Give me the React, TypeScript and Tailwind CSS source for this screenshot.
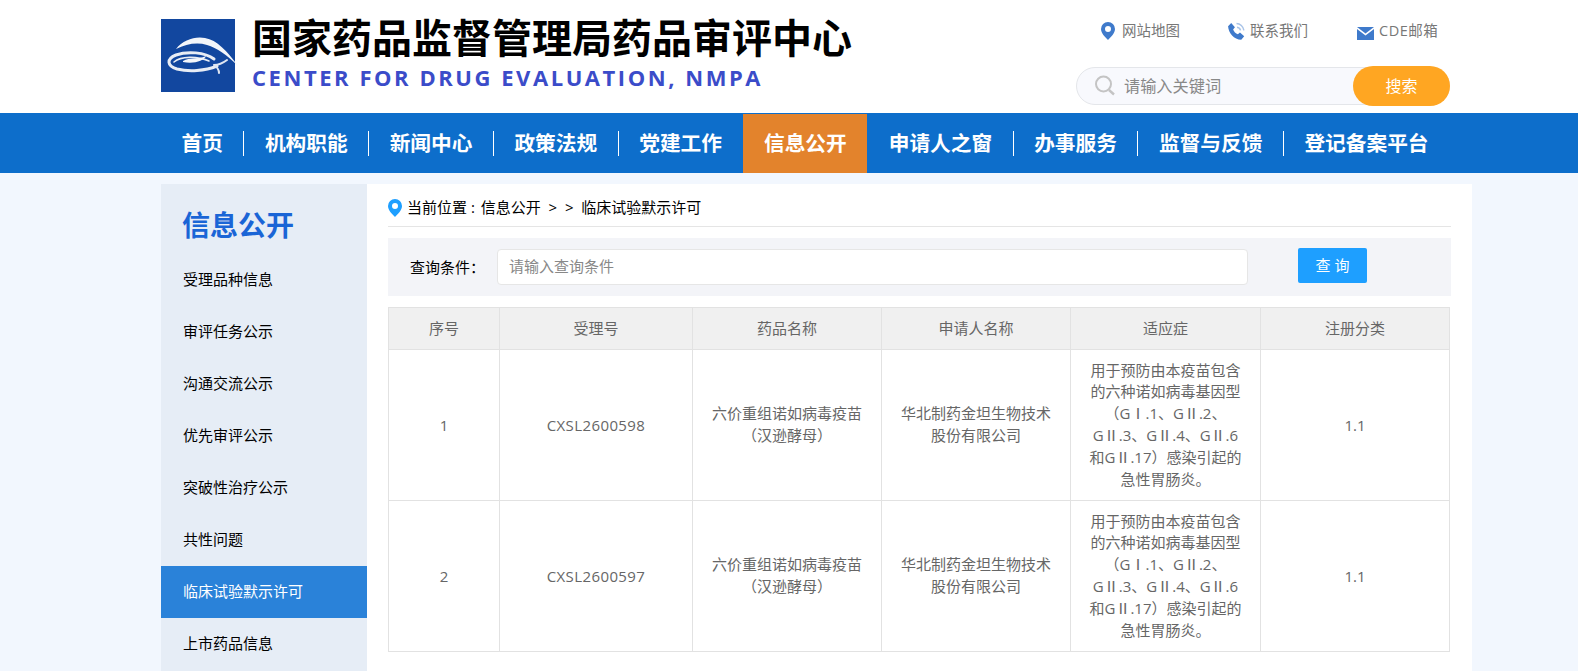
import React from "react";

const F = '"Open Sans","Noto Sans CJK SC",sans-serif';
const nav = ["首页","机构职能","新闻中心","政策法规","党建工作","信息公开","申请人之窗","办事服务","监督与反馈","登记备案平台"];
const side = ["受理品种信息","审评任务公示","沟通交流公示","优先审评公示","突破性治疗公示","共性问题","临床试验默示许可","上市药品信息"];
const cols = [111,193,189,189,190,189];
const heads = ["序号","受理号","药品名称","申请人名称","适应症","注册分类"];
const rows = [["1","CXSL2600598"],["2","CXSL2600597"]];

function Logo(){
  return (
    <svg width="80" height="73" viewBox="0 0 80 73" className="shrink-0 -mr-[6px]">
      <defs><filter id="b" x="-10%" y="-10%" width="120%" height="120%"><feGaussianBlur stdDeviation="0.7"/></filter></defs>
      <rect width="74" height="73" fill="#12479f"/>
      <g fill="none" strokeLinecap="round" filter="url(#b)">
        <path d="M15 30 C22 21 34 17 44 19 C56 21 66 32 77 47 C66 36 56 29 46 26 C36 23 25 25 15 30Z" fill="#f2f5fa" stroke="none"/>
        <path d="M53 40 C44 33 26 32 15 36 C5 40 6 47 16 50 C28 53 44 52 56 47" stroke="#e8edf5" strokeWidth="3"/>
        <path d="M13 43 C20 37 36 37 48 42" stroke="#e8edf5" strokeWidth="1.600"/>
        <path d="M53 46 C56 48 58 51 58 54 M53 46 C58 46 62 44 66 41" stroke="#dfe6f2" strokeWidth="2"/>
        <path d="M22 42 C29 38 36 41 45 37 C43 42 33 45 22 43Z" fill="#f5f7fb" stroke="none"/>
      </g>
    </svg>
  );
}
function Pin({c,w=14,h=18}:{c:string;w?:number;h?:number}){
  return <svg width={w} height={h} viewBox="0 0 14 18" className="shrink-0"><path fillRule="evenodd" d="M7 0a7 7 0 0 1 7 7c0 4-4 8-7 11C4 15 0 11 0 7a7 7 0 0 1 7-7Zm0 4a3 3 0 1 0 0 6 3 3 0 0 0 0-6Z" fill={c}/></svg>;
}
function Phone(){
  return <svg width="19" height="19" viewBox="0 0 18 18" className="shrink-0"><path d="M1 4 4 1l3.500 4-1.700 2c.8 2 2.400 3.700 4.500 4.700l2-1.700 4 3.500-2.800 3.300C6.500 16.800 1.500 10.500 1 4Z" fill="#3f7acb"/><path d="M9 1.500c3.400 0 6.500 2.800 7 6.500M9.500 5c1.700.2 3 1.300 3.300 3" fill="none" stroke="#a9c4e8" strokeWidth="1.400"/></svg>;
}
function Mail(){
  return <svg width="17" height="13" viewBox="0 0 17 13" className="shrink-0 mt-[4px]"><path d="M0 0h17L8.500 6.500Z" fill="#3f7acb"/><path d="M0 2l8.500 6.500L17 2v11H0Z" fill="#3f7acb"/></svg>;
}
function Search(){
  return <svg width="22" height="22" viewBox="0 0 22 22" className="shrink-0"><circle cx="9.500" cy="9" r="7.500" fill="none" stroke="#c4c4c4" strokeWidth="2"/><path d="M15 15l5 4.500" stroke="#c4c4c4" strokeWidth="2.400"/></svg>;
}
const td = "border border-[#e2e2e2]";
const tdt = "border border-[#e2e2e2] px-[15px] leading-[21.800px]";

export default function App(){
  return (
    <div className="h-screen overflow-hidden bg-[#f2f7fe]" style={{fontFamily:F}}>
      <header className="h-[113px] bg-white flex pl-[161px]">
        <div className="pt-[19px]"><Logo/></div>
        <div className="ml-[17px] pt-[13px]">
          <div className="text-[40px] leading-[50px] font-bold text-black whitespace-nowrap">国家药品监督管理局药品审评中心</div>
          <div className="text-[22px] leading-[28px] font-bold text-[#3b4cc9] tracking-[2.550px] whitespace-nowrap">CENTER FOR DRUG EVALUATION, NMPA</div>
        </div>
        <div className="ml-auto mr-[128px] w-[375px] flex flex-col items-end">
          <div className="mt-[21px] flex items-center text-[14.500px] leading-[20px] text-[#777] self-stretch">
            <span className="ml-[26px] flex items-center gap-[7px] w-[126px]"><Pin c="#3f7acb"/>网站地图</span>
            <span className="flex items-center gap-[4px] w-[130px]"><Phone/>联系我们</span>
            <span className="flex items-center gap-[5px] tracking-[0.500px]"><Mail/>CDE邮箱</span>
          </div>
          <div className="mt-[26px] w-[374px] h-[38px] rounded-[19px] bg-[#f8f9fd] border border-[#e4e6ea] flex items-center relative pl-[17px]">
            <Search/>
            <span className="ml-[8px] text-[16.200px] text-[#888]">请输入关键词</span>
            <div className="absolute right-[-1px] top-[-2px] w-[97px] h-[40px] rounded-[20px] bg-[#ffa622] text-white text-[16px] flex items-center justify-center">搜索</div>
          </div>
        </div>
      </header>
      <nav className="h-[60px] bg-[#0d6ecb] flex items-center pl-[161px]">
        {nav.map((n,i)=>(
          <React.Fragment key={n}>
            {i>0 && <span className={`h-[25px] w-px ${i===5||i===6?"bg-transparent":"bg-white"}`}/>}
            <div className={`h-[59px] self-end flex items-center px-[20.500px] text-[20.700px] font-bold text-white whitespace-nowrap ${i===5?"bg-[#e3832c]":""}`}>{n}</div>
          </React.Fragment>
        ))}
      </nav>
      <main className="flex pl-[161px] pt-[11px]">
        <aside className="w-[206px] shrink-0 bg-[#e6edf6] h-[600px]">
          <h2 className="pl-[21px] pt-[19px] pb-[7px] text-[28px] leading-[44px] font-bold text-[#1a65d6]">信息公开</h2>
          {side.map((s)=>(
            <div key={s} className={`h-[52px] flex items-center pl-[22px] pb-[1px] text-[15px] ${s==="临床试验默示许可"?"bg-[#2a82d9] text-white":"text-black"}`}>{s}</div>
          ))}
        </aside>
        <section className="w-[1105px] shrink-0 bg-white px-[21px] h-[600px]">
          <div className="h-[43px] flex items-center border-b border-[#e5e5e5] text-[15px] text-black pt-[5px]">
            <Pin c="#1e9fff"/><span className="ml-[5px] whitespace-pre">当前位置 :<span className="ml-[2px]"> 信息公开</span>  &gt;  &gt;  临床试验默示许可</span>
          </div>
          <div className="mt-[11px] h-[58px] bg-[#f3f4f8] flex items-center pl-[22px] text-[15px]">
            <span className="w-[87px] text-black">查询条件：</span>
            <div className="-mt-[1px] w-[751px] h-[36px] bg-white border border-[#e6e6e6] rounded-[4px] flex items-center pl-[11px] text-[#888]">请输入查询条件</div>
            <div className="-mt-[3px] ml-[50px] w-[69px] h-[35px] bg-[#1e9fff] text-white rounded-[2px] flex items-center justify-center">查 询</div>
          </div>
          <table className="mt-[11px] w-[1061px] table-fixed border-collapse text-[15px] text-[#666] text-center">
            <colgroup>{cols.map((w,i)=><col key={i} style={{width:w}}/>)}</colgroup>
            <thead><tr className="h-[42px] bg-[#f0f0f0]">{heads.map(h=><th key={h} className="font-normal border border-[#e2e2e2]">{h}</th>)}</tr></thead>
            <tbody>
              {rows.map(r=>(
                <tr key={r[0]} className="h-[151px]">
                  <td className={td}>{r[0]}</td>
                  <td className={`${td} tracking-[0.400px]`}>{r[1]}</td>
                  <td className={tdt}>六价重组诺如病毒疫苗（汉逊酵母）</td>
                  <td className={tdt}>华北制药金坦生物技术股份有限公司</td>
                  <td className={tdt}>用于预防由本疫苗包含的六种诺如病毒基因型（GⅠ.1、GⅡ.2、GⅡ.3、GⅡ.4、GⅡ.6和GⅡ.17）感染引起的急性胃肠炎。</td>
                  <td className={td}>1.1</td>
                </tr>
              ))}
            </tbody>
          </table>
        </section>
      </main>
    </div>
  );
}
